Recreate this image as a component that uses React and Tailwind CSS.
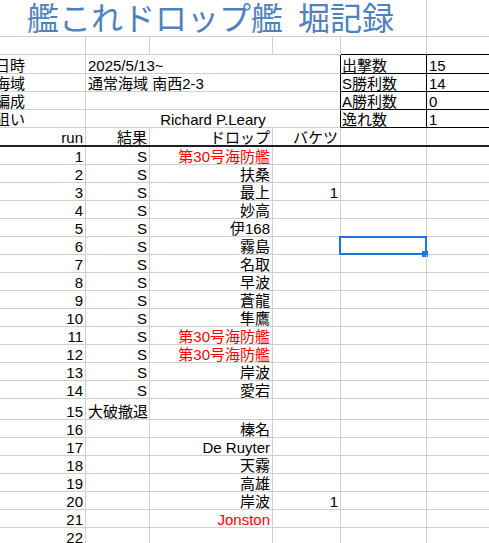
import React from 'react';
import clsx from 'clsx';

const FONT = "font-['Liberation_Sans','Noto_Sans_CJK_JP',sans-serif]";

const drops = [
  { n: 1, res: 'S', drop: '第30号海防艦', red: true },
  { n: 2, res: 'S', drop: '扶桑' },
  { n: 3, res: 'S', drop: '最上', bucket: '1' },
  { n: 4, res: 'S', drop: '妙高' },
  { n: 5, res: 'S', drop: '伊168' },
  { n: 6, res: 'S', drop: '霧島', selected: true },
  { n: 7, res: 'S', drop: '名取' },
  { n: 8, res: 'S', drop: '早波' },
  { n: 9, res: 'S', drop: '蒼龍' },
  { n: 10, res: 'S', drop: '隼鷹' },
  { n: 11, res: 'S', drop: '第30号海防艦', red: true },
  { n: 12, res: 'S', drop: '第30号海防艦', red: true },
  { n: 13, res: 'S', drop: '岸波' },
  { n: 14, res: 'S', drop: '愛宕' },
  { n: 15, res: '大破撤退', left: true, tall: true },
  { n: 16, drop: '榛名' },
  { n: 17, drop: 'De Ruyter' },
  { n: 18, drop: '天霧' },
  { n: 19, drop: '高雄' },
  { n: 20, drop: '岸波', bucket: '1' },
  { n: 21, drop: 'Jonston', red: true },
  { n: 22 },
];

const stats = [
  ['出撃数', '15'],
  ['S勝利数', '14'],
  ['A勝利数', '0'],
  ['逸れ数', '1'],
];

const info = [
  { label: '日時', value: '2025/5/13~', h: 'h-[19px]' },
  { label: '海域', value: '通常海域 南西2-3', h: 'h-[18px]' },
  { label: '編成', value: '', h: 'h-[18px]' },
  { label: '狙い', value: 'Richard P.Leary', h: 'h-[18px]', center: true },
];

const Cell = ({ w, right, center, className, children }) => (
  <div
    className={clsx(
      'relative shrink-0 flex items-end whitespace-nowrap leading-[15px] border-b border-r',
      w,
      right && 'justify-end pr-[2px]',
      center && 'justify-center',
      !right && !center && 'pl-[2px]',
      className || 'border-[#d0d0d0]'
    )}
  >
    {children}
  </div>
);

const Selection = () => (
  <div className="absolute -top-[1px] -left-[2px] -right-[1px] -bottom-[1px] border-2 border-[#1a73e8]">
    <div className="absolute -right-[3px] -bottom-[4px] w-[6px] h-[6px] bg-[#1a73e8]" />
  </div>
);

export default function App() {
  return (
    <div className={clsx('w-[489px] h-[543px] overflow-hidden bg-white text-black text-[15px]', FONT)}>
      {/* title row */}
      <div className="flex h-[37px]">
        <div className="w-[427px] shrink-0 border-r border-b border-[#d0d0d0] pl-[27px] flex items-start">
          <span className="text-[32px] leading-[34px] -mt-[1px] text-[#4f81bd] font-['Noto_Sans_CJK_JP',sans-serif]">
            艦これドロップ艦<span className="inline-block w-[15px]" />堀記録
          </span>
        </div>
        <div className="flex-1 border-b border-[#d0d0d0]" />
      </div>

      {/* blank row */}
      <div className="flex h-[18px]">
        <Cell w="w-[86px]" />
        <Cell w="w-[64px]" />
        <Cell w="w-[123px]" />
        <Cell w="w-[68px]" />
        <Cell w="w-[86px]" className="border-r-[#d0d0d0] border-b-black" />
        <div className="flex-1 border-b border-black" />
      </div>

      {/* info + stats */}
      {info.map((row, i) => (
        <div key={row.label} className={clsx('flex', row.h)}>
          <Cell w="w-[86px]">
            <span className="-ml-[7px]">{row.label}</span>
          </Cell>
          <Cell w="w-[255px]" center={row.center} className="border-b-[#d0d0d0] border-r-black">
            {row.value}
          </Cell>
          <Cell w="w-[86px]" className="border-black">
            <span className="-ml-[1px]">{stats[i][0]}</span>
          </Cell>
          <div className="flex-1 flex items-end leading-[15px] pl-[2px] border-b border-black">
            {stats[i][1]}
          </div>
        </div>
      ))}

      {/* header */}
      <div className="flex h-[19px] border-b-2 border-[#1f1f1f]">
        <Cell w="w-[86px]" right className="border-r-[#d0d0d0] border-b-0">run</Cell>
        <Cell w="w-[64px]" right className="border-r-[#d0d0d0] border-b-0">結果</Cell>
        <Cell w="w-[123px]" right className="border-r-[#d0d0d0] border-b-0">ドロップ</Cell>
        <Cell w="w-[68px]" right className="border-r-[#d0d0d0] border-b-0">バケツ</Cell>
        <Cell w="w-[86px]" className="border-r-[#d0d0d0] border-b-0" />
        <div className="flex-1" />
      </div>

      {/* drop log */}
      {drops.map((d) => (
        <div key={d.n} className={clsx('flex', d.tall ? 'h-[21px]' : 'h-[18px]')}>
          <Cell w="w-[86px]" right>{d.n}</Cell>
          <Cell w="w-[64px]" right={!d.left}>{d.res}</Cell>
          <Cell w="w-[123px]" right>
            <span className={d.red ? 'text-[#ff0000]' : undefined}>{d.drop}</span>
          </Cell>
          <Cell w="w-[68px]" right>{d.bucket}</Cell>
          <Cell w="w-[86px]">{d.selected && <Selection />}</Cell>
          <div className="flex-1 border-b border-[#d0d0d0]" />
        </div>
      ))}
    </div>
  );
}
